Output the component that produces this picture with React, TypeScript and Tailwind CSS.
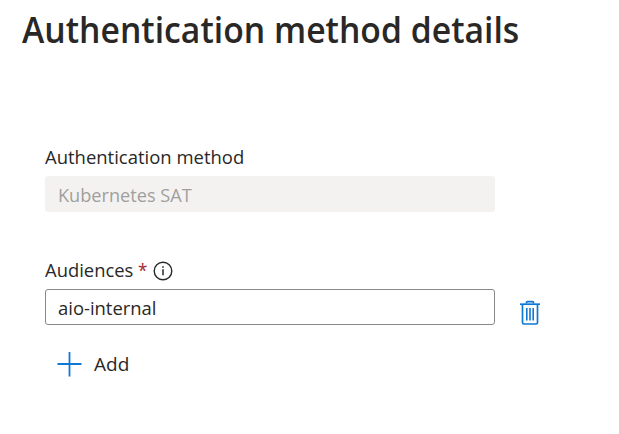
import React from 'react';

function InfoIcon() {
  return (
    <svg width="20" height="20" viewBox="0 0 20 20" fill="none" stroke="#292827" strokeWidth="1.4">
      <circle cx="10" cy="10" r="8.8" />
      <path d="M10 8.2v6" strokeWidth="1.5" />
      <path d="M10 5.2v1.6" strokeWidth="1.6" />
    </svg>
  );
}

function TrashIcon() {
  return (
    <svg width="20" height="25" viewBox="0 0 20 25" fill="none" stroke="#0f78d4">
      <path d="M0 4.2h20" strokeWidth="1.7" />
      <path d="M6.5 3.5V2.6q0-.9.9-.9h5.2q.9 0 .9.9v.9M2.5 4.5v18q0 1.5 1.5 1.5h12q1.5 0 1.5-1.5v-18" strokeWidth="1.7" />
      <path d="M6.8 8v12.5M10 8v12.5M13.2 8v12.5" strokeWidth="1.6" />
    </svg>
  );
}

export default function App() {
  return (
    <main className="flex h-[434px] w-[619px] flex-col bg-white font-['Open_Sans','Noto_Sans',sans-serif] text-[#292827]">
      <h1 className="mt-[6px] ml-[22px] h-12 whitespace-nowrap text-[36px] leading-[48px] font-semibold">
        <span className="inline-block origin-left scale-x-[0.937]">Authentication method details</span>
      </h1>
      <section className="mt-[89px] ml-[45px] w-[450px]">
        <label className="block h-7 text-[19px] leading-7 whitespace-nowrap">
          <span className="inline-block origin-left scale-x-[0.972]">Authentication method</span>
        </label>
        <div className="mt-[5px] flex h-9 items-center rounded-[3px] bg-[#f3f2f1] pt-[2px] pl-[13px] text-[19px] text-[#a19f9d]">
          <span className="origin-left scale-x-[0.955]">Kubernetes SAT</span>
        </div>
      </section>
      <section className="mt-[44px] ml-[45px]">
        <div className="flex h-7 items-center text-[19px]">
          <span className="w-[88px] origin-left scale-x-[0.968] whitespace-nowrap">Audiences</span>
          <span className="ml-[5px] w-[10px] origin-left scale-x-90 text-[#a4262c]">*</span>
          <span className="mt-[2px] ml-[5px]"><InfoIcon /></span>
        </div>
        <div className="mt-[5px] flex items-center">
          <div className="flex h-9 w-[450px] items-center rounded-[3px] border border-[#8a8886] px-3 pt-[2px] text-[19px]">
            <span className="origin-left scale-x-[0.97]">aio-internal</span>
          </div>
          <button className="mt-2 ml-[25px] -mb-[3px]"><TrashIcon /></button>
        </div>
        <button className="mt-[25px] ml-3 flex h-7 items-center gap-3 text-[19px]">
          <svg width="25" height="25" fill="none" stroke="#0f78d4" strokeWidth="1.8"><path d="M12.5 0v24.5M.5 12h24" /></svg>
          <span>Add</span>
        </button>
      </section>
    </main>
  );
}
